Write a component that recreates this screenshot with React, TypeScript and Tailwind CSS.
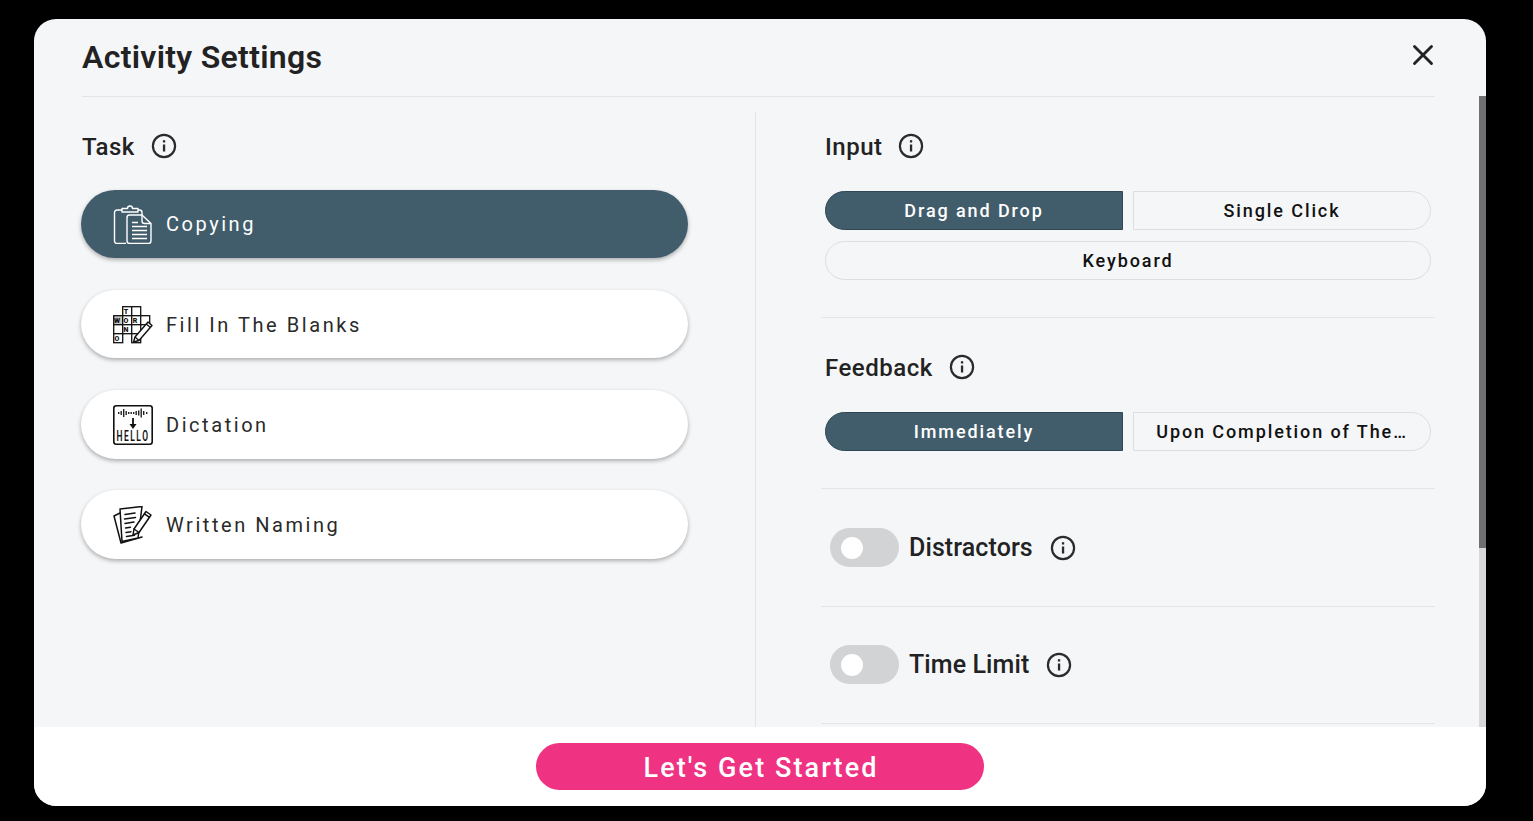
import React from 'react';
import { X } from 'lucide-react';

const font = { fontFamily: 'Roboto, "Liberation Sans", sans-serif' };

function InfoIcon() {
  return (
    <svg width="26" height="26" viewBox="0 0 26 26" fill="none" className="shrink-0">
      <circle cx="13" cy="13" r="11.1" stroke="#2b2b2b" strokeWidth="2.2" />
      <rect x="11.900" y="11.500" width="2.300" height="7" fill="#2b2b2b" />
      <rect x="11.900" y="7.200" width="2.300" height="2.300" fill="#2b2b2b" />
    </svg>
  );
}

function CopyingIcon() {
  return (
    <svg width="40" height="40" viewBox="0 0 40 40" fill="none" stroke="#fff" strokeWidth="1.4" strokeLinejoin="round">
      <path d="M13 39.500H4a2.500 2.500 0 0 1-2.500-2.500V8.500A2.500 2.500 0 0 1 4 6h5" />
      <path d="M9 6V4.500h5.500a2.500 2.500 0 0 1 5 0H25V8H9z" />
      <path d="M25 6h1.500A2.500 2.500 0 0 1 29 8.500V11" />
      <path d="M16.500 11H29l9 8.500V37a2.500 2.500 0 0 1-2.500 2.500h-19A2.500 2.500 0 0 1 14 37V13.500a2.500 2.500 0 0 1 2.500-2.500z" />
      <path d="M29 11v6a2.500 2.500 0 0 0 2.500 2.500H38" />
      <path d="M19 18.500h6M19 22.500h15M19 26.500h15M19 30.500h15M19 34.500h15" />
    </svg>
  );
}

function CrosswordIcon() {
  const cells = [
    [9, 0, 'T'], [18, 0, ''],
    [0, 9, 'W'], [9, 9, 'O'], [18, 9, 'R'], [27, 9, ''],
    [0, 18, ''], [9, 18, 'N'], [18, 18, ''],
    [0, 27, 'O'], [18, 27, ''],
  ] as const;
  return (
    <svg width="40" height="38" viewBox="0 0 40 38" fill="none">
      {cells.map(([x, y, letter]) => (
        <g key={`${x}-${y}`}>
          <rect x={x + 0.7} y={y + 0.7} width="9" height="9" stroke="#111" strokeWidth="1.3" fill={letter === 'W' ? '#c8c8c8' : '#fff'} />
          {letter && (
            <text x={x + 5.2} y={y + 7.800} textAnchor="middle" fontSize="7" fontWeight="900" fill="#111" style={font}>
              {letter}
            </text>
          )}
        </g>
      ))}
      <path d="M20.500 36l1.500-5L35 16l4 3.500L26 34.500z" fill="#fff" stroke="#111" strokeWidth="1.400" strokeLinejoin="round" />
      <path d="M22 31l4 3.500M33.300 18l4 3.500" stroke="#111" strokeWidth="1.200" />
    </svg>
  );
}

function DictationIcon() {
  const bars = [[5, 2], [7.500, 4], [10, 8], [12.500, 4], [15, 2], [17.500, 2], [20, 2], [22.500, 4], [25, 5], [27.500, 9], [30, 4], [33, 2]];
  return (
    <svg width="40" height="40" viewBox="0 0 40 40" fill="none">
      <rect x="0.800" y="0.800" width="38.400" height="38.400" rx="2.500" fill="#fff" stroke="#111" strokeWidth="1.600" />
      {bars.map(([x, h]) => (
        <rect key={x} x={x} y={8 - h / 2} width="1.400" height={h} fill="#222" />
      ))}
      <path d="M20 13v7" stroke="#111" strokeWidth="1.800" />
      <path d="M16.500 19h7L20 24z" fill="#111" />
      <text transform="translate(20 36) scale(0.6 1)" textAnchor="middle" fontSize="14" fontWeight="600" fill="#111" style={font}>
        HELLO
      </text>
    </svg>
  );
}

function WrittenIcon() {
  return (
    <svg width="40" height="38" viewBox="0 0 40 38" fill="none" stroke="#111" strokeWidth="1.500" strokeLinejoin="round" strokeLinecap="round">
      <path d="M8 6.500L1 10l7 27 21-6" fill="#fff" />
      <path d="M7 3l22-2.500-4 31.500-16 3.500z" fill="#fff" />
      <path d="M12 8.500l10-1.500M11.500 13l11-1.500M12 17.500l9-1.500M12.500 22l5-.8M13 26.500l5-.8M13.500 30.500l8-1.300" />
      <path d="M20 29l1-6L33 5.500l5 3.500L26 26.500z" fill="#fff" />
      <path d="M21 23l5 3.500M31.500 7.800l5 3.500" />
    </svg>
  );
}

function TaskPill({ icon, label, active }: { icon: React.ReactNode; label: string; active?: boolean }) {
  return (
    <div
      className={`flex h-[68.35px] w-[607px] items-center gap-[13px] rounded-full pl-[32px] text-[20px] tracking-[2.55px] shadow-[0_2px_4px_rgba(0,0,0,0.3)] ${
        active ? 'bg-[#415c6b] text-white' : 'bg-white pt-[2px] text-[#2a2a2a]'
      }`}
    >
      <span className="flex w-[40px] justify-center">{icon}</span>
      {label}
    </div>
  );
}

function Segment({ label, active, shape }: { label: string; active?: boolean; shape: string }) {
  return (
    <div
      className={`flex h-[39px] items-center justify-center border px-[23px] text-[18px] font-medium tracking-[1.9px] ${shape} ${
        active ? 'border-[#2f4753] bg-[#415c6b] text-white' : 'border-[#dcdee1] text-[#111]'
      }`}
    >
      <span className="whitespace-nowrap">{label}</span>
    </div>
  );
}

function Heading({ label }: { label: string }) {
  return (
    <div className="flex h-[30px] items-center gap-[16px] text-[24px] font-medium tracking-[0.5px] text-[#222]">
      <span className="pt-[1px]">{label}</span>
      <InfoIcon />
    </div>
  );
}

function ToggleRow({ label, className }: { label: string; className: string }) {
  return (
    <div className={`flex items-center border-b border-[#e4e5e8] pl-[9px] ${className}`}>
      <div className="flex h-[39px] w-[69px] items-center rounded-full bg-[#d2d3d4] pl-[11px]">
        <div className="h-[22px] w-[22px] rounded-full bg-white" />
      </div>
      <span className="ml-[10px] mr-[17px] text-[25px] font-medium tracking-[0.1px] text-[#222]">{label}</span>
      <InfoIcon />
    </div>
  );
}

export default function App() {
  return (
    <div className="h-[821px] overflow-hidden bg-black px-[34px] pt-[19px]" style={font}>
      <div className="flex h-[787px] w-[1452px] flex-col overflow-hidden rounded-[22px] bg-[#f5f6f8]">
        <div className="flex h-[77px] shrink-0 items-center justify-between pl-[48px] pr-[46px]">
          <h1 className="pb-[2px] text-[32px] font-semibold tracking-[0.3px] text-[#222]">Activity Settings</h1>
          <X size={34} strokeWidth={2} className="mb-[5px] text-[#222]" />
        </div>

        <div className="flex min-h-0 flex-1">
          <div className="ml-[48px] mr-[44px] flex flex-1 border-t border-[#e4e5e8]">
            <div className="mt-[15px] w-[674px] shrink-0 border-r border-[#e4e5e8] pt-[19px]">
              <Heading label="Task" />
              <div className="-ml-px mt-[29px] flex flex-col gap-[31.75px]">
                <TaskPill icon={<CopyingIcon />} label="Copying" active />
                <TaskPill icon={<CrosswordIcon />} label="Fill In The Blanks" />
                <TaskPill icon={<DictationIcon />} label="Dictation" />
                <TaskPill icon={<WrittenIcon />} label="Written Naming" />
              </div>
            </div>

            <div className="min-w-0 flex-1 pl-[65px]">
              <div className="border-b border-[#e4e5e8] pb-[37px] pl-[4px] pt-[34px]">
                <Heading label="Input" />
                <div className="mt-[30px] grid w-[606px] grid-cols-2 gap-x-[10px] gap-y-[11px]">
                  <Segment label="Drag and Drop" active shape="rounded-l-full" />
                  <Segment label="Single Click" shape="rounded-r-full" />
                  <div className="col-span-2">
                    <Segment label="Keyboard" shape="rounded-full" />
                  </div>
                </div>
              </div>

              <div className="border-b border-[#e4e5e8] pb-[37px] pl-[4px] pt-[34px]">
                <Heading label="Feedback" />
                <div className="mt-[30px] grid w-[606px] grid-cols-2 gap-x-[10px]">
                  <Segment label="Immediately" active shape="rounded-l-full" />
                  <Segment label="Upon Completion of The…" shape="rounded-r-full" />
                </div>
              </div>

              <ToggleRow label="Distractors" className="pb-[39px] pt-[39px]" />
              <ToggleRow label="Time Limit" className="pb-[39px] pt-[38px]" />
            </div>
          </div>

          <div className="w-[7px] shrink-0 bg-[#d8d8d8]">
            <div className="h-[452px] bg-[#6f6f6f]" />
          </div>
        </div>

        <div className="flex h-[79px] shrink-0 items-center justify-center bg-white">
          <div className="flex h-[47px] w-[448px] items-center justify-center rounded-full bg-[#ef3282] pl-[2px] pt-[3px] text-[27px] font-medium tracking-[2.1px] text-white">
            Let's Get Started
          </div>
        </div>
      </div>
    </div>
  );
}
